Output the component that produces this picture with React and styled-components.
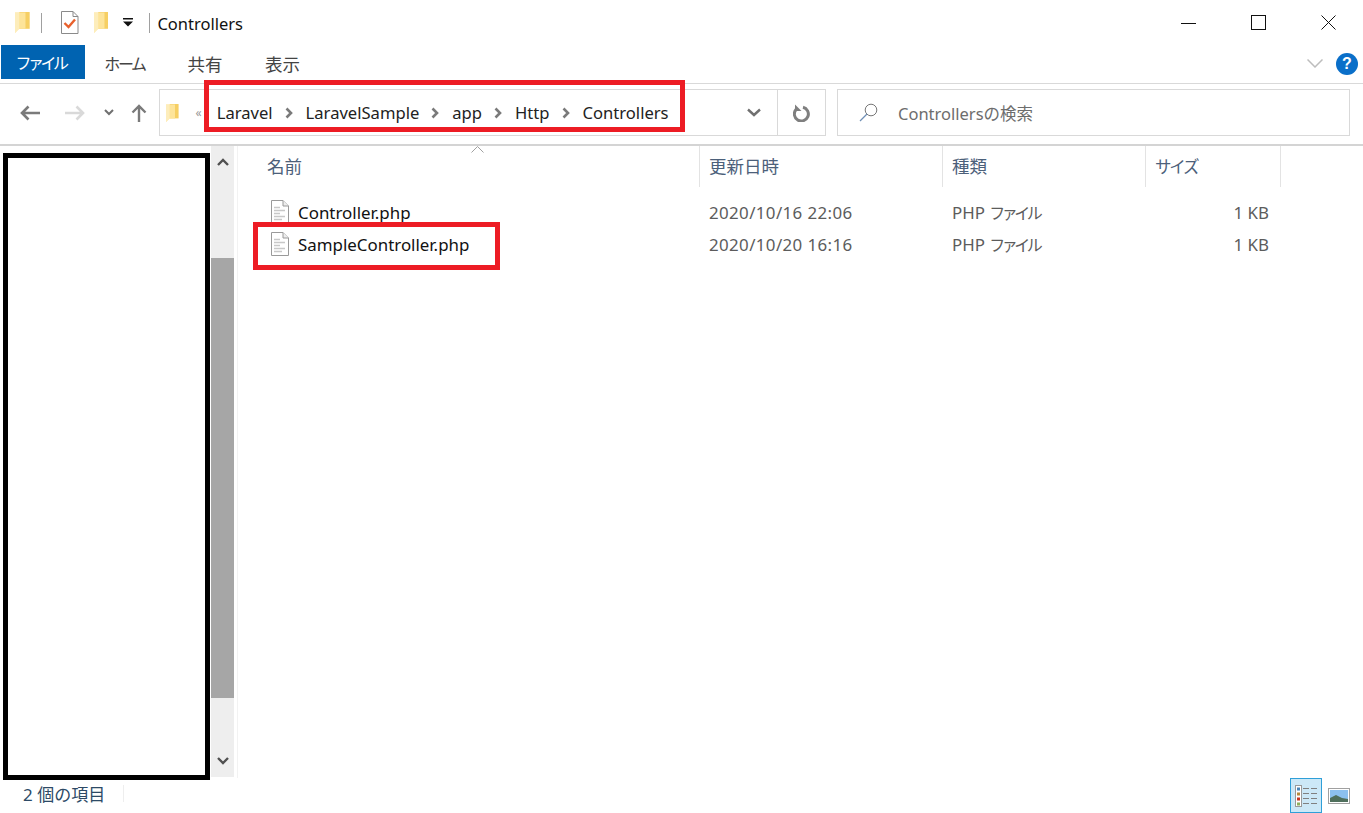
import React from "react"
import styled, { createGlobalStyle } from "styled-components"

const Global = createGlobalStyle`
  html, body { margin: 0; padding: 0; background: #fff; }
  body {
    font-family: "Noto Sans", "Noto Sans CJK JP", sans-serif;
    overflow: hidden;
  }
`

const Window = styled.div`
  width: 1363px;
  height: 813px;
  display: flex;
  flex-direction: column;
  position: relative;
  background: #fff;
  overflow: hidden;
`

/* title bar */
const TitleBar = styled.div`
  height: 45px;
  display: flex;
  align-items: center;
  padding-left: 15px;
  flex: none;
`
const QuickSep = styled.div`
  width: 1px;
  height: 20px;
  background: #a0a0a0;
  margin: 0 ${({ $right }) => $right}px 0 ${({ $left }) => $left}px;
`
const QuickGap = styled.div`
  width: ${({ $w }) => $w}px;
  flex: none;
`
const TitleText = styled.div`
  font-size: 16.5px;
  color: #111;
  margin-top: 1px;
`
const WinButtons = styled.div`
  margin-left: auto;
  display: flex;
  align-items: center;
  gap: 55px;
  padding-right: 27px;
`

/* ribbon tabs */
const TabRow = styled.div`
  height: 38px;
  flex: none;
  display: flex;
  align-items: flex-start;
  padding-left: 1px;
  border-bottom: 1px solid #d9d9d9;
  position: relative;
`
const FileTab = styled.div`
  width: 84px;
  height: 34px;
  box-sizing: border-box;
  padding-right: 5px;
  background: #0063b1;
  color: #fff;
  font-size: 16px;
  letter-spacing: -3.5px;
  display: flex;
  align-items: center;
  justify-content: center;
`
const Tab = styled.div`
  width: ${({ $w }) => $w}px;
  height: 36px;
  color: #444;
  font-size: ${({ $kana }) => ($kana ? 16 : 17.5)}px;
  letter-spacing: ${({ $kana }) => ($kana ? "-2.3px" : "0")};
  display: flex;
  align-items: center;
  justify-content: center;
`
const RibbonRight = styled.div`
  margin-left: auto;
  display: flex;
  align-items: center;
  gap: 13px;
  padding: 0 5px 0 0;
  height: 37px;
`
const Help = styled.div`
  width: 22px;
  height: 22px;
  border-radius: 50%;
  background: #0a6fc9;
  color: #fff;
  font: bold 16px "Liberation Sans", sans-serif;
  display: flex;
  align-items: center;
  justify-content: center;
`

/* address row */
const AddressRow = styled.div`
  height: 62px;
  flex: none;
  display: flex;
  align-items: flex-start;
  padding-top: 5px;
  box-sizing: border-box;
  border-bottom: 2px solid #d4d4d4;
`
const NavButtons = styled.div`
  width: 159px;
  height: 47px;
  flex: none;
  display: flex;
  align-items: center;
  padding-left: 20px;
  box-sizing: border-box;
`
const NavGap = styled.div`
  width: ${({ $w }) => $w}px;
  flex: none;
`
const AddressBox = styled.div`
  width: 667px;
  height: 47px;
  flex: none;
  box-sizing: border-box;
  border: 1px solid #d9d9d9;
  display: flex;
  align-items: center;
  padding-left: 6px;
  position: relative;
`
const Overflow = styled.span`
  color: #999;
  font-size: 12px;
  margin-left: 17px;
`
const Crumbs = styled.div`
  display: flex;
  align-items: center;
  font-size: 16.6px;
  color: #222;
  margin-left: 15px;
`
const Chevron = styled.svg`
  width: 8px;
  height: 12px;
  margin: 0 13px 0 12px;
`
const DropZone = styled.div`
  margin-left: auto;
  width: 47px;
  height: 45px;
  display: flex;
  align-items: center;
  justify-content: center;
`
const RefreshZone = styled.div`
  width: 47px;
  height: 45px;
  border-left: 1px solid #d9d9d9;
  display: flex;
  align-items: center;
  justify-content: center;
`
const SearchBox = styled.div`
  width: 513px;
  height: 47px;
  margin-left: 11px;
  box-sizing: border-box;
  border: 1px solid #d9d9d9;
  display: flex;
  align-items: center;
  padding-left: 21px;
  gap: 20px;
  color: #6d6d6d;
  font-size: 16.5px;
`

/* main area */
const Main = styled.div`
  flex: 1;
  display: flex;
  min-height: 0;
`
const NavPane = styled.div`
  width: 238px;
  flex: none;
  display: flex;
  padding-left: 3px;
  box-sizing: border-box;
  position: relative;
  border-right: 1px solid #f2f2f2;
`
const Redacted = styled.div`
  position: absolute;
  left: 3px;
  top: 7px;
  width: 207px;
  height: 627px;
  box-sizing: border-box;
  border: 5px solid #000;
  background: #fff;
  z-index: 2;
`
const NavBody = styled.div`
  width: 208px;
  flex: none;
`
const ScrollBar = styled.div`
  width: 23px;
  background: #eeeeee;
  display: flex;
  flex-direction: column;
  align-items: center;
  height: 631px;
`
const ScrollArrow = styled.div`
  height: ${({ $h }) => $h}px;
  display: flex;
  align-items: center;
  justify-content: center;
  flex: none;
`
const ScrollThumb = styled.div`
  width: 100%;
  height: 440px;
  background: #a6a6a6;
  flex: none;
`
const ScrollTrack = styled.div`
  flex: ${({ $h }) => ($h ? `0 0 ${$h}px` : "1")};
`
const Content = styled.div`
  flex: 1;
  position: relative;
`
const HeaderRow = styled.div`
  height: 41px;
  display: flex;
  padding-left: 20px;
  position: relative;
`
const HeaderCell = styled.div`
  width: ${({ $w }) => $w}px;
  box-sizing: border-box;
  border-right: 1px solid #e3e3e3;
  color: #4c607a;
  font-size: ${({ $kana }) => ($kana ? 16.5 : 17.5)}px;
  letter-spacing: ${({ $kana }) => ($kana ? "-2.3px" : "0")};
  padding: 0 0 2px 9px;
  display: flex;
  align-items: center;
`
const SortCaret = styled.svg`
  position: absolute;
  left: 233px;
  top: 0;
`
const FileList = styled.div`
  padding-top: 9px;
`
const FileRow = styled.div`
  height: 32px;
  display: flex;
  align-items: center;
  font-size: 16.9px;
  padding-left: 20px;
`
const NameCell = styled.div`
  width: 442px;
  flex: none;
  display: flex;
  align-items: center;
  gap: 9px;
  padding-left: 13px;
  box-sizing: border-box;
  color: #111;
`
const MetaCell = styled.div`
  width: ${({ $w }) => $w}px;
  flex: none;
  color: #5c5c5c;
  box-sizing: border-box;
  padding-left: 9px;
  text-align: ${({ $right }) => ($right ? "right" : "left")};
  padding-right: ${({ $right }) => ($right ? 11 : 0)}px;
`
const DateText = styled.span`
  letter-spacing: 0.38px;
`
const KanaText = styled.span`
  font-size: 16px;
  letter-spacing: -3.5px;
`

/* status bar */
const StatusBar = styled.div`
  height: 35px;
  flex: none;
  display: flex;
  align-items: center;
  padding-left: 23px;
  font-size: 17px;
  color: #2d4a66;
`
const StatusText = styled.span`
  margin-bottom: 4px;
`
const StatusSep = styled.div`
  width: 1px;
  height: 17px;
  background: #eee;
  margin: 0 0 4px 18px;
`
const ViewButtons = styled.div`
  margin-left: auto;
  display: flex;
  align-items: center;
  gap: 6px;
  padding-right: 13px;
`
const DetailsBtn = styled.div`
  width: 32px;
  height: 35px;
  box-sizing: border-box;
  background: #cce8f7;
  border: 1px solid #2f9fd8;
  display: flex;
  align-items: center;
  justify-content: center;
`

/* annotations over the screenshot */
const RedMark = styled.div`
  position: absolute;
  left: ${({ $x }) => $x}px;
  top: ${({ $y }) => $y}px;
  width: ${({ $w }) => $w}px;
  height: ${({ $h }) => $h}px;
  box-sizing: border-box;
  border: 5px solid #ed1c24;
  pointer-events: none;
  z-index: 3;
`

const Folder = ({ size = 18 }) => (
  <svg width={size * 0.7} height={size} viewBox="0 0 14 20">
    <path d="M4 0 H14 V16 H4 Z" fill="#f6cf63" />
    <path d="M0 0.5 H10 V16 H4 L0 20 Z" fill="#fde49a" />
    <path d="M0 0.5 H4 V16 L0 20 Z" fill="#fdedbb" />
  </svg>
)

const FileIcon = () => (
  <svg width="18" height="24" viewBox="0 0 18 24">
    <path d="M0.5 0.5 H12 L17.5 6 V23.5 H0.5 Z" fill="#fff" stroke="#9a9a9a" />
    <path d="M12 0.5 V6 H17.5" fill="#eee" stroke="#9a9a9a" />
    <path d="M3 7.5 H9 M3 10.5 H14 M3 13.5 H9 M3 16.5 H14 M3 19.5 H11" stroke="#c8c8c8" strokeWidth="1.3" />
  </svg>
)

const Crumb = () => (
  <Chevron viewBox="0 0 8 12">
    <path d="M1.5 1.5 L6 6 L1.5 10.5" fill="none" stroke="#7a7a7a" strokeWidth="2.6" />
  </Chevron>
)

const files = [
  { name: "Controller.php", date: "2020/10/16 22:06" },
  { name: "SampleController.php", date: "2020/10/20 16:16" },
]
const path = ["Laravel", "LaravelSample", "app", "Http", "Controllers"]

export default function App() {
  return (
    <Window>
      <Global />
      <TitleBar>
        <Folder size={21} />
        <QuickSep $left={11} $right={19} />
        <svg width="18" height="23" viewBox="0 0 18 23">
          <path d="M0.5 0.5 H12 L17 5.5 V22.5 H0.5 Z" fill="#fff" stroke="#8a8a8a" />
          <path d="M12 0.5 V5.5 H17" fill="none" stroke="#8a8a8a" />
          <path d="M3.5 12 L7.5 16 L14 8.5" fill="none" stroke="#e8602c" strokeWidth="2.4" />
        </svg>
        <QuickGap $w={15} />
        <Folder size={21} />
        <QuickGap $w={15} />
        <svg width="10" height="9" viewBox="0 0 10 9">
          <path d="M0 0 H10 V1.5 H0 Z M0 3.5 H10 L5 8.5 Z" fill="#111" />
        </svg>
        <QuickSep $left={16} $right={7} />
        <TitleText>Controllers</TitleText>
        <WinButtons>
          <svg width="15" height="15" viewBox="0 0 15 15">
            <path d="M0 8.5 H15" stroke="#111" />
          </svg>
          <svg width="15" height="15" viewBox="0 0 15 15">
            <rect x="0.5" y="0.5" width="14" height="14" fill="none" stroke="#111" />
          </svg>
          <svg width="15" height="15" viewBox="0 0 15 15">
            <path d="M0.5 0.5 L14.5 14.5 M14.5 0.5 L0.5 14.5" stroke="#111" />
          </svg>
        </WinButtons>
      </TitleBar>

      <TabRow>
        <FileTab>ファイル</FileTab>
        <Tab $w={79} $kana>ホーム</Tab>
        <Tab $w={82}>共有</Tab>
        <Tab $w={73}>表示</Tab>
        <RibbonRight>
          <svg width="16" height="9" viewBox="0 0 16 9">
            <path d="M0.5 0.5 L8 8 L15.5 0.5" fill="none" stroke="#bdbdbd" strokeWidth="1.5" />
          </svg>
          <Help>?</Help>
        </RibbonRight>
      </TabRow>

      <AddressRow>
        <NavButtons>
          <svg width="20" height="16" viewBox="0 0 20 16">
            <path d="M20 8 H2 M8.5 1.5 L2 8 L8.5 14.5" fill="none" stroke="#7a7a7a" strokeWidth="2.6" />
          </svg>
          <NavGap $w={25} />
          <svg width="20" height="16" viewBox="0 0 20 16">
            <path d="M0 8 H18 M11.5 1.5 L18 8 L11.5 14.5" fill="none" stroke="#d9d9d9" strokeWidth="2.6" />
          </svg>
          <NavGap $w={19} />
          <svg width="10" height="7" viewBox="0 0 10 7">
            <path d="M1 1 L5 5 L9 1" fill="none" stroke="#707070" strokeWidth="2" />
          </svg>
          <NavGap $w={17} />
          <svg width="16" height="18" viewBox="0 0 16 18">
            <path d="M8 18 V2 M1.5 8.5 L8 2 L14.5 8.5" fill="none" stroke="#7a7a7a" strokeWidth="2.4" />
          </svg>
        </NavButtons>
        <AddressBox>
          <Folder size={18} />
          <Overflow>«</Overflow>
          <Crumbs>
            {path.map((p, i) => (
              <React.Fragment key={p}>
                {i > 0 && <Crumb />}
                <span>{p}</span>
              </React.Fragment>
            ))}
          </Crumbs>
          <DropZone>
            <svg width="14" height="9" viewBox="0 0 14 9">
              <path d="M1 1.5 L7 7 L13 1.5" fill="none" stroke="#707070" strokeWidth="2.4" />
            </svg>
          </DropZone>
          <RefreshZone>
            <svg width="18" height="18" viewBox="0 0 18 18">
              <path d="M3 5.5 A7 7 0 1 0 10 3.2" fill="none" stroke="#7f7f7f" strokeWidth="3" />
              <path d="M2 0.5 V7 H8.5 Z" fill="#7f7f7f" />
            </svg>
          </RefreshZone>
        </AddressBox>
        <SearchBox>
          <svg width="19" height="19" viewBox="0 0 19 19">
            <circle cx="12" cy="7" r="5.8" fill="none" stroke="#777" />
            <path d="M8 11 L1 18" stroke="#6f8fb5" strokeWidth="1.3" />
          </svg>
          <span>Controllersの検索</span>
        </SearchBox>
      </AddressRow>

      <Main>
        <NavPane>
          <NavBody />
          <Redacted />
          <ScrollBar>
            <ScrollArrow $h={32}>
              <svg width="12" height="8" viewBox="0 0 12 8">
                <path d="M1 7 L6 2 L11 7" fill="none" stroke="#505050" strokeWidth="2.4" />
              </svg>
            </ScrollArrow>
            <ScrollTrack $h={80} />
            <ScrollThumb />
            <ScrollTrack />
            <ScrollArrow $h={32}>
              <svg width="12" height="8" viewBox="0 0 12 8">
                <path d="M1 1 L6 6 L11 1" fill="none" stroke="#505050" strokeWidth="2.4" />
              </svg>
            </ScrollArrow>
          </ScrollBar>
        </NavPane>
        <Content>
          <HeaderRow>
            <SortCaret width="13" height="7" viewBox="0 0 13 7">
              <path d="M0.5 6.5 L6.5 0.5 L12.5 6.5" fill="none" stroke="#a0a0a0" />
            </SortCaret>
            <HeaderCell $w={442}>名前</HeaderCell>
            <HeaderCell $w={243}>更新日時</HeaderCell>
            <HeaderCell $w={203}>種類</HeaderCell>
            <HeaderCell $w={135} $kana>サイズ</HeaderCell>
          </HeaderRow>
          <FileList>
            {files.map(f => (
              <FileRow key={f.name}>
                <NameCell>
                  <FileIcon />
                  <span>{f.name}</span>
                </NameCell>
                <MetaCell $w={243}><DateText>{f.date}</DateText></MetaCell>
                <MetaCell $w={203}>PHP <KanaText>ファイル</KanaText></MetaCell>
                <MetaCell $w={134} $right>1 KB</MetaCell>
              </FileRow>
            ))}
          </FileList>
        </Content>
      </Main>

      <StatusBar>
        <StatusText>2 個の項目</StatusText>
        <StatusSep />
        <ViewButtons>
          <DetailsBtn>
            <svg width="22" height="22" viewBox="0 0 22 22">
              <rect x="0.5" y="0.5" width="6" height="21" fill="#fff" stroke="#999" />
              <rect x="2" y="2.5" width="3" height="3" fill="#4a86b8" />
              <rect x="2" y="7.5" width="3" height="3" fill="#b58a3c" />
              <rect x="2" y="12.5" width="3" height="3" fill="#c8341e" />
              <rect x="2" y="17.5" width="3" height="3" fill="#8cb060" />
              <path d="M8 3.5 H14 M16 3.5 H22 M8 8.5 H14 M16 8.5 H22 M8 13.5 H14 M16 13.5 H22 M8 18.5 H14 M16 18.5 H22" stroke="#808080" />
            </svg>
          </DetailsBtn>
          <svg width="22" height="16" viewBox="0 0 22 16">
            <rect x="0.5" y="0.5" width="21" height="15" fill="#fff" stroke="#a0a0a0" />
            <rect x="2" y="2" width="18" height="12" fill="#8cc0ee" />
            <path d="M2 10 L8 7 L14 10 L20 11 V14 H2 Z" fill="#4f6f5c" />
          </svg>
        </ViewButtons>
      </StatusBar>

      <RedMark $x={204} $y={80} $w={481} $h={52} />
      <RedMark $x={253} $y={222} $w={247} $h={48} />
    </Window>
  )
}
